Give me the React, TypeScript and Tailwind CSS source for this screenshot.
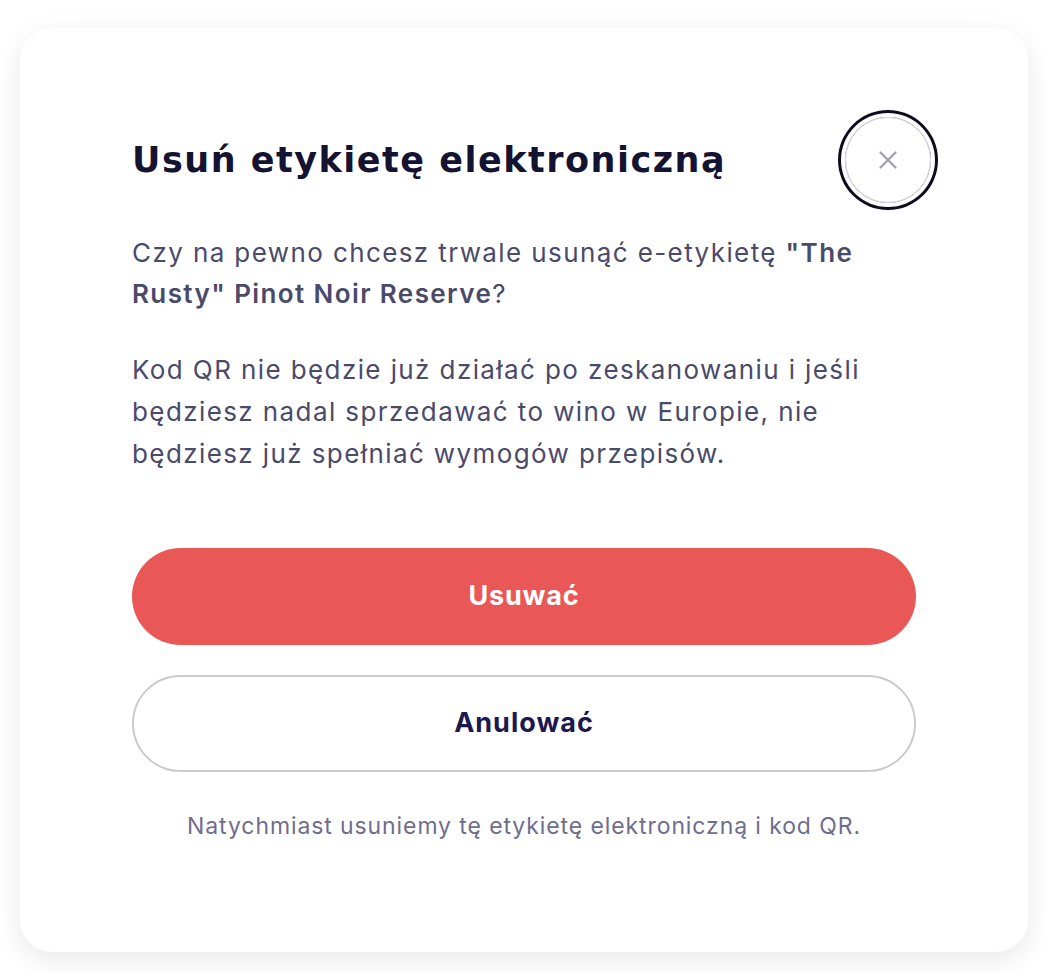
import { X } from 'lucide-react';

const font = { fontFamily: 'Inter, "Noto Sans", sans-serif' };
const titleFont = { fontFamily: '"DejaVu Sans", Inter, sans-serif' };

export default function App() {
  return (
    <div className="min-h-[972px] bg-white pt-[28px] px-[20px]" style={font}>
      <div className="bg-white rounded-[32px] shadow-[0_8px_28px_rgba(0,0,0,0.09)] pt-[82px] pb-[111px] px-[112px]">
        <div className="flex items-center justify-between -mr-[22px]">
          <h1 className="text-[35px] leading-[42px] font-bold text-[#141331] tracking-[1.5px]" style={titleFont}>
            Usuń etykietę elektroniczną
          </h1>
          <button className="w-[86px] h-[86px] rounded-full border border-[#d2d2d8] ring-[3px] ring-[#0d0d1f] ring-offset-4 ring-offset-white flex items-center justify-center m-[7px]">
            <X className="w-[30px] h-[30px] text-[#a3a3ab]" strokeWidth={1.8} />
          </button>
        </div>

        <p className="mt-[22px] text-[26px] leading-[41px] tracking-[1.4px] text-[#4a4a6a]">
          Czy na pewno chcesz trwale usunąć e-etykietę{' '}
          <span className="font-semibold">"The Rusty" Pinot Noir Reserve</span>?
        </p>
        <p className="mt-[35px] text-[26px] leading-[42px] tracking-[1.4px] text-[#4a4a6a]">
          Kod QR nie będzie już działać po zeskanowaniu i jeśli będziesz nadal sprzedawać to wino w
          Europie, nie będziesz już spełniać wymogów przepisów.
        </p>

        <div className="mt-[73px] flex flex-col gap-[30px]">
          <button className="h-[97px] rounded-full bg-[#ea5757] text-white text-[27px] tracking-[0.8px] font-bold">
            Usuwać
          </button>
          <button className="h-[97px] rounded-full border-2 border-[#cacacf] bg-white text-[#1c1850] text-[27px] tracking-[1px] font-bold">
            Anulować
          </button>
        </div>

        <p className="mt-[39px] text-center text-[23px] leading-[30px] tracking-[0.9px] text-[#6f6d8c]">
          Natychmiast usuniemy tę etykietę elektroniczną i kod QR.
        </p>
      </div>
    </div>
  );
}
